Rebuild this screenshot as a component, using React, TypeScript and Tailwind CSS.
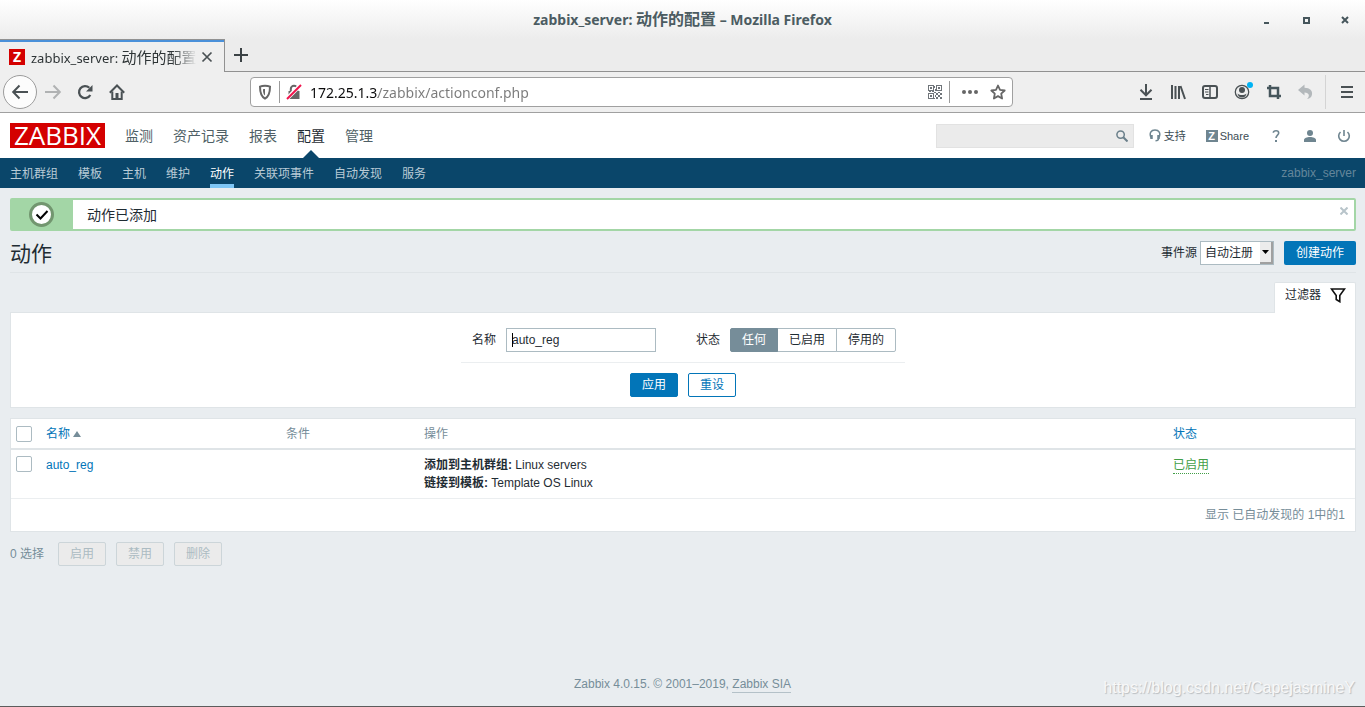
import { useState } from 'react'
import type { ReactNode } from 'react'

const MENU = ['监测', '资产记录', '报表', '配置', '管理']
const SUBMENU = ['主机群组', '模板', '主机', '维护', '动作', '关联项事件', '自动发现', '服务']
const STATUSES = ['任何', '已启用', '停用的']
const BULK_ACTIONS = ['启用', '禁用', '删除']

interface ToolButtonProps {
  label: string
  className?: string
  children: ReactNode
}

function ToolButton({ label, className = 'text-[#4a5154]', children }: ToolButtonProps) {
  return (
    <button type="button" aria-label={label} className={`relative shrink-0 ${className}`}>
      <svg
        width="16"
        height="16"
        viewBox="0 0 16 16"
        fill="none"
        stroke="currentColor"
        strokeWidth="2"
        aria-hidden="true"
        className="block overflow-visible"
      >
        {children}
      </svg>
    </button>
  )
}

function QrIcon() {
  return (
    <svg width="14" height="14" viewBox="0 0 14 14" fill="#6f7479" shapeRendering="crispEdges" aria-hidden="true">
      <path
        fillRule="evenodd"
        d="M0 0h6v6H0zM1 1v4h4V1zM8 0h6v6H8zM9 1v4h4V1zM0 8h6v6H0zM1 9v4h4V9zM2 2h2v2H2zM10 2h2v2h-2zM2 10h2v2H2z"
      />
      <path d="M6 1h1v2H6zM7 4h1v2H7zM1 6h2v1H1zM4 6h2v1H4zM6 7h2v1H6zM8 8h2v2H8zM10 7h2v1h-2zM12 8h2v2h-2zM10 10h2v2h-2zM7 10h1v2H7zM8 12h2v2H8zM12 12h2v2h-2zM6 13h1v1H6z" />
    </svg>
  )
}

function TitleBar() {
  return (
    <div className="relative flex h-[39px] items-center justify-center bg-linear-to-b from-white to-[#ececec] font-['Noto_Sans','Noto_Sans_CJK_SC',sans-serif]">
      <h1 className="text-sm font-bold text-[#4c5c62]">
        zabbix_server: <span className="text-base leading-5">动作的配置</span> – Mozilla Firefox
      </h1>
      <div className="absolute right-[15px] flex items-center gap-[29px] text-[#46565c]">
        <button type="button" aria-label="最小化">
          <svg width="10" height="10" viewBox="0 0 10 10" className="block" aria-hidden="true">
            <path d="M2 7h5v2H2z" fill="currentColor" />
          </svg>
        </button>
        <button type="button" aria-label="最大化">
          <svg width="10" height="10" viewBox="0 0 10 10" className="block" aria-hidden="true">
            <path d="M3 3h5v5H3z" fill="none" stroke="currentColor" strokeWidth="2" />
          </svg>
        </button>
        <button type="button" aria-label="关闭窗口">
          <svg width="10" height="10" viewBox="0 0 10 10" className="block" aria-hidden="true">
            <path d="M2 2l6 6M8 2l-6 6" stroke="currentColor" strokeWidth="2" />
          </svg>
        </button>
      </div>
    </div>
  )
}

function TabStrip() {
  return (
    <div className="flex h-[33px] bg-[#ececec]">
      <div className="flex w-[225px] items-center border-t border-r border-[#919191] bg-[#efefef]">
        <div className="flex h-full w-full items-center border-t-2 border-[#4a90d9] pr-[11px] pl-[9px]">
          <span className="flex size-4 shrink-0 items-center justify-center bg-[#d40000] font-['Open_Sans',sans-serif] text-sm leading-4 font-bold text-white">
            Z
          </span>
          <span className="ml-[6px] flex-1 mask-r-from-85% font-['Noto_Sans','Noto_Sans_CJK_SC',sans-serif] text-[13px] whitespace-nowrap text-[#2e3436]">
            zabbix_server: <span className="text-[15px] leading-5">动作的配置</span>
          </span>
          <button type="button" aria-label="关闭标签页" className="ml-1 text-[#4a5154]">
            <svg width="12" height="12" viewBox="0 0 12 12" className="block" aria-hidden="true">
              <path d="M1.5 1.5l9 9M10.5 1.5l-9 9" stroke="currentColor" strokeWidth="1.7" />
            </svg>
          </button>
        </div>
      </div>
      <div className="flex flex-1 items-center border-b border-[#919191] pl-2">
        <button type="button" aria-label="新建标签页" className="text-[#3b4245]">
          <svg width="16" height="16" viewBox="0 0 16 16" className="block" aria-hidden="true">
            <path d="M8 1v14M1 8h14" stroke="currentColor" strokeWidth="2" />
          </svg>
        </button>
      </div>
    </div>
  )
}

function NavBar() {
  return (
    <div className="flex h-[41px] items-center border-b border-[#a0a0a0] bg-[#efefef] pr-[10px] pl-[3px]">
      <div className="flex items-center gap-4">
        <div className="-mr-2 flex size-[34px] items-center justify-center rounded-full border border-[#9c9c9c] bg-[#fcfcfc]">
          <ToolButton label="后退">
            <path d="M16 8H1.5M7.5 1.5L1.2 8l6.3 6.5" />
          </ToolButton>
        </div>
        <ToolButton label="前进" className="text-[#b0b2b3]">
          <path d="M0 8h14.500M8.500 1.500L14.800 8l-6.300 6.500" />
        </ToolButton>
        <ToolButton label="刷新">
          <path d="M13.300 11A6 6 0 1 1 12.300 3.800" strokeWidth="2.300" />
          <path d="M15.500 1v6.500H9z" fill="currentColor" stroke="none" />
        </ToolButton>
        <ToolButton label="主页">
          <path d="M.8 8.700L8 1.500l7.200 7.200" />
          <path d="M3.300 7.500V15h9.400V7.500" />
          <path d="M6.500 9h3v6h-3z" fill="currentColor" stroke="none" />
        </ToolButton>
      </div>

      <div className="mx-[125px] flex h-[30px] flex-1 items-center rounded-[4px] border border-[#a0a0a0] bg-white px-[6px]">
        <svg width="16" height="16" viewBox="0 0 16 16" className="shrink-0" aria-hidden="true">
          <path d="M8 1.800c2 0 3.800.3 5 .8 0 6-.8 10-5 12-4.200-2-5-6-5-12 1.200-.5 3-.8 5-.8z" fill="none" stroke="#666" strokeWidth="2" />
          <path d="M8 5v6.500c-1.700-1.200-2-3.300-2-6.200.6-.2 1.300-.3 2-.3z" fill="#666" />
        </svg>
        <span className="ml-[6px] h-[22px] w-px bg-[#9b9b9b]" />
        <svg width="16" height="16" viewBox="0 0 16 16" className="ml-[6px] shrink-0" aria-hidden="true">
          <path d="M2.500 7h11v8h-11z" fill="#666" />
          <path d="M4.800 7V5a3.200 3.200 0 0 1 6.400 0v2" fill="none" stroke="#666" strokeWidth="2" />
          <path d="M1 14.500L14.500 1" stroke="#fff" strokeWidth="4" />
          <path d="M1 15L15 1" stroke="#f0144c" strokeWidth="2" />
        </svg>
        <input
          type="text"
          aria-label="地址"
          defaultValue="172.25.1.3/zabbix/actionconf.php"
          className="ml-2 h-6 min-w-0 flex-1 bg-[linear-gradient(to_right,#0c0c0d_68px,#7a7a7a_68px)] bg-clip-text font-['Noto_Sans',sans-serif] text-sm text-transparent outline-none"
        />
        <QrIcon />
        <span className="ml-[7px] h-[22px] w-px bg-[#9b9b9b]" />
        <span className="ml-3 flex gap-3">
          <ToolButton label="页面操作" className="text-[#666]">
            <g fill="currentColor" stroke="none">
              <circle cx="2" cy="8" r="2" />
              <circle cx="8" cy="8" r="2" />
              <circle cx="14" cy="8" r="2" />
            </g>
          </ToolButton>
          <ToolButton label="收藏" className="text-[#666]">
            <path d="M8 1.500l2 4.400 4.700.6-3.500 3.200.9 4.800L8 12.100l-4.100 2.400.9-4.800L1.300 6.500 6 5.900z" strokeWidth="1.800" strokeLinejoin="round" />
          </ToolButton>
        </span>
      </div>

      <div className="flex items-center gap-4">
        <ToolButton label="下载">
          <path d="M8 0v11M2.500 5.800L8 11.300l5.500-5.500M2 15h12" />
        </ToolButton>
        <ToolButton label="我的足迹">
          <path d="M2 1v14M5.500 2v13M9 2v13M10.500 2l4.500 13" />
        </ToolButton>
        <ToolButton label="侧栏">
          <rect x="1" y="2" width="14" height="12" rx="2" />
          <path d="M8 2v12" strokeWidth="1.500" />
          <path d="M3 5.500h3.500M3 8h3.500M4 10.500h2.500" strokeWidth="1" />
        </ToolButton>
        <ToolButton label="帐户">
          <circle cx="8" cy="8" r="6.700" strokeWidth="1.300" />
          <circle cx="8" cy="6" r="3" fill="currentColor" stroke="none" />
          <path d="M3.500 9.500c2.500 2 6.500 2 9 0-.5 2.500-2 4-4.500 4s-4-1.500-4.500-4z" fill="currentColor" stroke="none" />
          <circle cx="16" cy="1" r="3" fill="#00b3f4" stroke="none" />
        </ToolButton>
        <ToolButton label="截图" className="text-[#46565c]">
          <path d="M4 1v11h11M1 4h11v11" strokeWidth="2.500" />
        </ToolButton>
        <ToolButton label="撤销" className="text-[#b3b8bb]">
          <path d="M0 6l6.500-5.500v3.300C12 4 14.500 6.500 14 10.500c-.3 2.500-2 4-5 4.500 3-2.500 2.500-6.500-2.500-6.500v3z" fill="currentColor" stroke="none" />
        </ToolButton>
        <span className="-mr-[3px] -ml-[5px] h-[34px] w-px bg-[#d4d4d4]" />
        <ToolButton label="打开菜单">
          <path d="M2 3h12M2 8h12M2 13h12" />
        </ToolButton>
      </div>
    </div>
  )
}

function Header() {
  return (
    <header>
      <div className="flex h-[45px] items-center bg-white pr-[14px] pl-[10px]">
        <a
          href="#"
          aria-label="ZABBIX"
          className="flex h-[25px] w-[95px] items-center justify-center bg-[#d40000] font-['Open_Sans',sans-serif] text-[26px] leading-[25px] text-white"
        >
          ZABBIX
        </a>
        <nav className="ml-5 flex h-full flex-1 gap-5 text-sm">
          {MENU.map((item) => (
            <a
              key={item}
              href="#"
              className={`relative flex items-center ${item === '配置' ? 'text-[#1f2c33]' : 'text-[#4f5f66]'}`}
            >
              {item}
              {item === '配置' && (
                <span className="absolute bottom-0 left-1/2 -translate-x-1/2 border-x-8 border-b-8 border-x-transparent border-b-[#0a466a]" />
              )}
            </a>
          ))}
        </nav>
        <form className="mr-[15px] flex h-6 w-[198px] items-center border border-[#e2e2e2] bg-[#ebebeb] pr-[5px]">
          <input type="text" aria-label="搜索" className="min-w-0 flex-1 bg-transparent px-1 outline-none" />
          <button type="button" aria-label="搜索" className="text-[#6a7f8a]">
            <svg width="12" height="12" viewBox="0 0 12 12" className="block" fill="none" stroke="currentColor" aria-hidden="true">
              <circle cx="4.600" cy="4.600" r="3.700" strokeWidth="1.500" />
              <path d="M7.300 7.300l4.200 4.200" strokeWidth="2" />
            </svg>
          </button>
        </form>
        <div className="flex items-center gap-5 text-[11px] text-[#3c4c54]">
          <a href="#" className="flex items-center gap-[3px]">
            <svg width="12" height="13" viewBox="0 0 12 13" fill="none" stroke="#6f8590" strokeWidth="1.500" aria-hidden="true">
              <path d="M2 8.500C0 4 2 1 6 1s6 3 4 7.500" />
              <path d="M2.500 6v4M9.500 6v4" strokeWidth="2.500" />
              <path d="M9.500 9.500c0 1.500-1 2.300-3 2.300" />
            </svg>
            支持
          </a>
          <a href="#" className="flex items-center gap-[2px]">
            <span className="flex size-3 items-center justify-center bg-[#6f8590] font-bold text-white">Z</span>
            Share
          </a>
          <a href="#" aria-label="帮助">
            <svg width="14" height="14" viewBox="0 0 14 14" className="block" fill="none" stroke="#6f8590" strokeWidth="1.600" aria-hidden="true">
              <path d="M4.300 3.800C4.500 1.200 9.700 1 9.700 4c0 2-2.700 2.300-2.700 5" />
              <path d="M7 11v2" strokeWidth="2" />
            </svg>
          </a>
          <a href="#" aria-label="用户资料">
            <svg width="14" height="14" viewBox="0 0 14 14" className="block" fill="#6f8590" aria-hidden="true">
              <circle cx="7" cy="4" r="3" />
              <path d="M1 13v-2c0-2 3-3 6-3s6 1 6 3v2z" />
            </svg>
          </a>
          <a href="#" aria-label="退出">
            <svg width="14" height="14" viewBox="0 0 14 14" className="block" fill="none" stroke="#6f8590" strokeWidth="1.600" aria-hidden="true">
              <path d="M3.500 3a5.300 5.300 0 1 0 7 0M7 1v6" />
            </svg>
          </a>
        </div>
      </div>
      <nav className="flex h-[30px] items-stretch gap-5 bg-[#0a466a] pr-[9px] pl-[10px] text-[#b9cbd6]">
        {SUBMENU.map((item) => (
          <a
            key={item}
            href="#"
            className={`flex items-center border-b-4 pt-[6px] ${
              item === '动作' ? 'border-b-[#7ec6f5] text-white' : 'border-b-transparent'
            }`}
          >
            {item}
          </a>
        ))}
        <span className="ml-auto self-center text-[#64869b]">zabbix_server</span>
      </nav>
    </header>
  )
}

function SuccessMessage() {
  return (
    <output className="relative flex h-[33px] items-stretch rounded-[2px] border-2 border-[#a3d6a6] bg-white">
      <span className="flex w-[61px] items-center justify-center bg-[#a3d6a6] pr-[2px]">
        <svg width="25" height="25" viewBox="0 0 25 25" aria-hidden="true">
          <circle cx="12.500" cy="12.500" r="11" fill="#fff" stroke="#72966f" strokeWidth="3" />
          <path d="M7.500 12.500l4 4 7-7.500" fill="none" stroke="#000" strokeWidth="2" />
        </svg>
      </span>
      <span className="self-center pl-[14px] text-sm">动作已添加</span>
      <button type="button" aria-label="关闭" className="absolute top-[7px] right-[6px] text-[#b8c4ca]">
        <svg width="8" height="8" viewBox="0 0 8 8" className="block" aria-hidden="true">
          <path d="M0.500 0.500l7 7M7.500 0.500l-7 7" stroke="currentColor" strokeWidth="2" />
        </svg>
      </button>
    </output>
  )
}

function PageTitle() {
  return (
    <div className="mt-[10px] flex h-8 items-start justify-between border-b border-[#dfe4e7]">
      <h2 className="text-[21px] leading-[26px]">动作</h2>
      <form className="flex items-center">
        <label htmlFor="eventsource" className="mr-[3px]">
          事件源
        </label>
        <span className="relative">
          <select
            id="eventsource"
            className="block h-6 w-[74px] appearance-none border border-[#acbbc2] bg-white pl-1 outline-none"
          >
            <option>自动注册</option>
          </select>
          <span className="pointer-events-none absolute top-px right-px bottom-px flex w-[13px] items-center justify-center border-r-2 border-b-2 border-[#a0a0a0] bg-[#ececec]">
            <svg width="7" height="4" viewBox="0 0 7 4" aria-hidden="true">
              <path d="M0 0h7L3.500 4z" fill="#000" />
            </svg>
          </span>
        </span>
        <button type="button" className="ml-[10px] h-6 rounded-[2px] bg-[#0275b8] px-3 text-white">
          创建动作
        </button>
      </form>
    </div>
  )
}

function Filter() {
  const [status, setStatus] = useState(STATUSES[0])

  return (
    <section className="mt-[9px]">
      <div className="flex justify-end">
        <button
          type="button"
          className="relative z-10 -mb-px flex h-[31px] items-center gap-[9px] rounded-t-[2px] border border-b-0 border-[#dfe4e7] bg-white pr-[9px] pb-[6px] pl-[10px]"
        >
          过滤器
          <svg width="16" height="15" viewBox="0 0 16 15" fill="none" stroke="#111" strokeWidth="1.600" aria-hidden="true">
            <path d="M1.500 1h13L9.800 7.500v6.200L6.200 11.500v-4z" />
          </svg>
        </button>
      </div>
      <form className="flex flex-col items-center border border-[#dfe4e7] bg-white py-[10px]">
        <div className="flex items-center border-b border-[#ebeef0] pt-[5px] pr-[9px] pb-[10px] pl-[11px]">
          <label htmlFor="filter_name">名称</label>
          <span className="relative ml-[10px]">
            <input
              id="filter_name"
              type="text"
              defaultValue="auto_reg"
              className="block h-6 w-[150px] border border-[#acbbc2] bg-white px-[5px] outline-none"
            />
            <span className="absolute top-[5px] left-[6px] h-[14px] w-px bg-black" />
          </span>
          <fieldset className="ml-10 flex items-center">
            <legend className="float-left mr-[10px]">状态</legend>
            <span className="flex h-6">
              {STATUSES.map((item) => (
                <label
                  key={item}
                  className={`-ml-px flex items-center border px-[11px] first:ml-0 first:rounded-l-[2px] last:rounded-r-[2px] ${
                    item === status ? 'z-10 border-[#768d99] bg-[#768d99] text-white' : 'border-[#acbbc2] bg-white'
                  }`}
                >
                  <input
                    type="radio"
                    name="filter_status"
                    checked={item === status}
                    onChange={() => setStatus(item)}
                    className="sr-only"
                  />
                  {item}
                </label>
              ))}
            </span>
          </fieldset>
        </div>
        <div className="mt-[10px] flex gap-[10px]">
          <button type="button" className="h-6 rounded-[2px] border border-[#0275b8] bg-[#0275b8] px-[11px] text-white">
            应用
          </button>
          <button type="button" className="h-6 rounded-[2px] border border-[#0275b8] bg-white px-[11px] text-[#0275b8]">
            重设
          </button>
        </div>
      </form>
    </section>
  )
}

function ActionsTable() {
  const checkbox = 'block size-4 appearance-none rounded-[2px] border border-[#acbbc2] bg-white'

  return (
    <table className="mt-[10px] w-full table-fixed border-separate border-spacing-0 border border-[#dfe4e7] bg-white text-left">
      <thead className="text-[#768d99]">
        <tr className="h-[31px] *:border-b-2 *:border-[#dfe4e7] *:px-[5px] *:font-normal">
          <th className="w-[30px]">
            <input type="checkbox" aria-label="全选" className={checkbox} />
          </th>
          <th className="w-[240px]">
            <a href="#" className="text-[#0275b8]">
              名称
              <svg width="8" height="6" viewBox="0 0 8 6" className="ml-[3px] inline" aria-hidden="true">
                <path d="M0 6h8L4 0z" fill="#768d99" />
              </svg>
            </a>
          </th>
          <th className="w-[138px]">条件</th>
          <th>操作</th>
          <th className="w-[187px]">
            <a href="#" className="text-[#0275b8]">
              状态
            </a>
          </th>
        </tr>
      </thead>
      <tbody>
        <tr className="*:border-b *:border-[#ebeef0] *:px-[5px] *:py-[6px] *:align-top">
          <td>
            <input type="checkbox" aria-label="auto_reg" className={checkbox} />
          </td>
          <td>
            <a href="#" className="text-[#0275b8]">
              auto_reg
            </a>
          </td>
          <td />
          <td>
            <b>添加到主机群组:</b> Linux servers
            <br />
            <b>链接到模板:</b> Template OS Linux
          </td>
          <td>
            <a href="#" className="inline-block border-b border-dotted border-[#429e47] leading-[15px] text-[#429e47]">
              已启用
            </a>
          </td>
        </tr>
        <tr className="h-8">
          <td colSpan={5} className="px-[10px] text-right text-[#768d99]">
            显示 已自动发现的 1中的1
          </td>
        </tr>
      </tbody>
    </table>
  )
}

export default function App() {
  return (
    <div className="relative flex min-h-screen flex-col border-b border-[#5c5c5c] bg-[#e9edf0] font-['Liberation_Sans','Noto_Sans_CJK_SC',sans-serif] text-xs leading-[18px] text-[#1f2c33]">
      <TitleBar />
      <TabStrip />
      <NavBar />
      <Header />
      <main className="pt-[10px] pr-[9px] pl-[10px]">
        <SuccessMessage />
        <PageTitle />
        <Filter />
        <ActionsTable />
        <div className="mt-[10px] flex items-center gap-[10px]">
          <span className="mr-1 text-[#768d99]">0 选择</span>
          {BULK_ACTIONS.map((item) => (
            <button
              key={item}
              type="button"
              disabled
              className="h-6 rounded-[2px] border border-[#ccd5d9] bg-[#ebebeb] px-[11px] text-[#acbbc2]"
            >
              {item}
            </button>
          ))}
        </div>
      </main>
      <footer className="mt-auto pb-[13px] text-center text-[#768d99]">
        Zabbix 4.0.15. © 2001–2019,{' '}
        <a href="#" className="inline-block border-b border-[#b4c1c8] leading-4">
          Zabbix SIA
        </a>
      </footer>
      <span className="absolute right-[10px] bottom-[9px] text-base leading-[18px] text-[#f8f8f8] [text-shadow:1px_1px_1px_#b8bcbf]">
        https://blog.csdn.net/CapejasmineY
      </span>
    </div>
  )
}
